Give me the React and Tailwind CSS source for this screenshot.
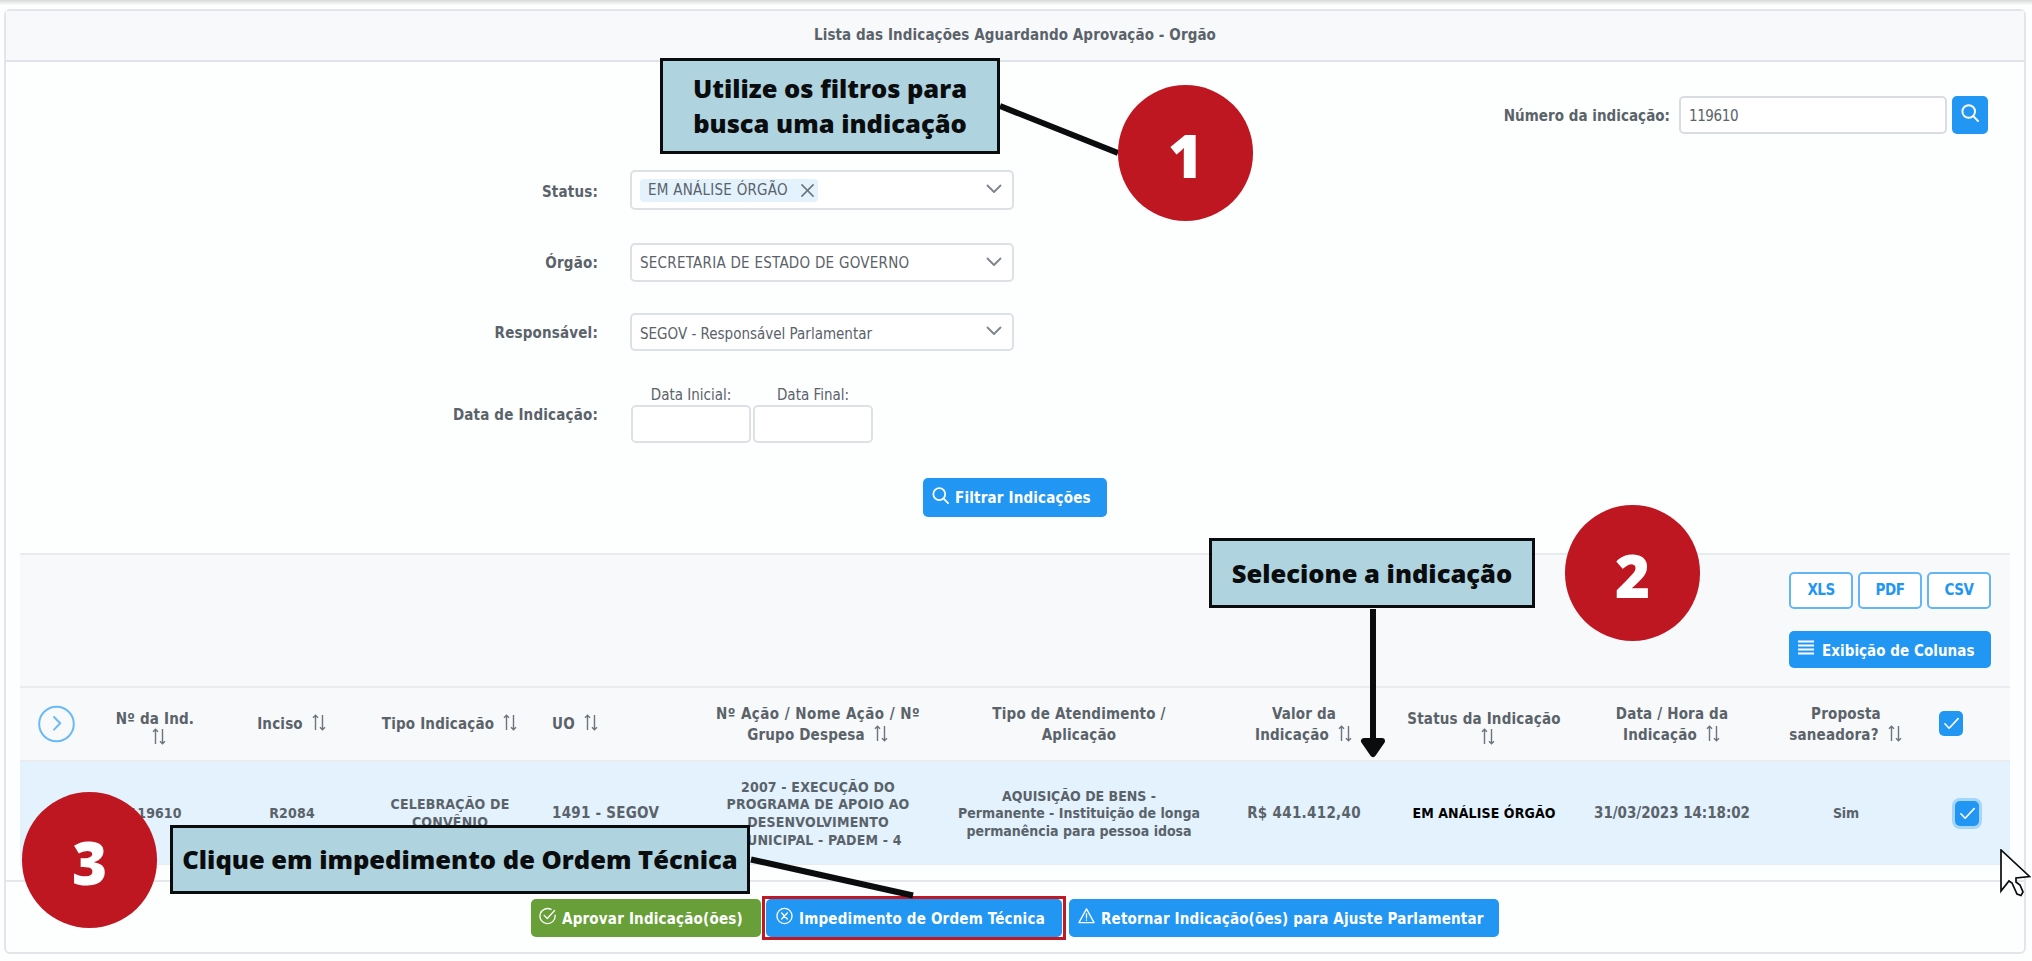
import React from "react";

const SearchIcon = ({ className }) => (
  <svg className={className} viewBox="0 0 18 18" fill="none" stroke="currentColor" strokeWidth="1.9" strokeLinecap="round">
    <circle cx="7.7" cy="7.5" r="6.3" />
    <path d="M12.3 12.2 17 17" />
  </svg>
);

const ChevronDown = () => (
  <svg className="h-[10px] w-[16px] shrink-0 text-[#7d848b]" viewBox="0 0 16 10" fill="none" stroke="currentColor" strokeWidth="1.8" strokeLinecap="round" strokeLinejoin="round">
    <path d="M1.5 1.5 8 8 14.5 1.5" />
  </svg>
);

const SortIcon = ({ className = "" }) => (
  <svg className={"inline-block h-[17px] w-[16px] shrink-0 text-[#6c757d] " + className} viewBox="0 0 16 17" fill="none" stroke="currentColor" strokeWidth="1.4">
    <path d="M4.5 16V1.500M2 3.700 4.500 1.200 7 3.700M11.500 1v14.500M9 13.300l2.500 2.500 2.500-2.500" />
  </svg>
);

const CheckBox = ({ focused }) => (
  <span className={"flex h-[25px] w-[24px] items-center justify-center rounded-[5px] bg-[#2196f3] text-white " + (focused ? "shadow-[0_0_0_3px_#a6d5fa]" : "")}>
    <svg className="h-[13px] w-[15px]" viewBox="0 0 17 13" fill="none" stroke="currentColor" strokeWidth="1.8" strokeLinecap="round" strokeLinejoin="round">
      <path d="M1 6.8 5.8 11.8 16 1" />
    </svg>
  </span>
);

const Select = ({ height, children }) => (
  <div className={"flex w-[384px] items-center justify-between rounded-[5px] border-2 border-[#dde1e6] bg-white pr-[10px] pl-2 text-[15px] font-normal " + height}>
    {children}
    <div className="pb-[2px]">
      <ChevronDown />
    </div>
  </div>
);

const Field = ({ label, labelClass = "", className = "", children }) => (
  <div className={"flex items-center " + className}>
    <div className={"w-[592px] text-right " + labelClass}>{label}</div>
    <div className="ml-8">{children}</div>
  </div>
);

const Lines = ({ items }) =>
  items.map((line, i) => (
    <div key={i} className="whitespace-nowrap">
      {line}
    </div>
  ));

const Sorted = ({ children }) => (
  <span className="inline-flex items-center gap-2">
    {children}
    <SortIcon className="-mt-1" />
  </span>
);

const columns = "grid grid-cols-[74px_122px_152px_164px_168px_236px_286px_164px_196px_180px_168px_80px] items-center text-center";

const Badge = ({ className, children }) => (
  <div className={"absolute flex h-[136px] w-[135px] items-center justify-center rounded-full bg-[#be1722] pt-[3px] font-['Open_Sans',sans-serif] text-[60px] leading-none font-extrabold tracking-normal text-white " + className}>
    {children}
  </div>
);

const Callout = ({ className, children }) => (
  <div className={"absolute flex flex-col items-center justify-center border-[3px] border-[#0a0c0e] bg-[#b0d3e0] font-['Open_Sans',sans-serif] text-[25.5px] leading-[35px] font-extrabold tracking-normal whitespace-nowrap text-[#0a0c0e] " + className}>
    {children}
  </div>
);

const ActionButton = ({ className, icon, children }) => (
  <div className={"flex h-[38px] items-center gap-[6px] rounded-[5px] font-bold whitespace-nowrap text-white " + className}>
    <svg className="-mt-1 h-[18px] w-[17px] shrink-0" viewBox="0 0 18 18" fill="none" stroke="currentColor" strokeWidth="1.4" strokeLinecap="round" strokeLinejoin="round">
      {icon}
    </svg>
    <span className="pt-[3px]">{children}</span>
  </div>
);

export default function App() {
  return (
    <div className="relative h-[961px] w-[2032px] overflow-hidden bg-[#fdfefe] font-['DejaVu_Sans_Condensed','DejaVu_Sans',sans-serif] text-[15px] leading-[21px] font-bold tracking-[0.18px] text-[#5a626a]">
      <div className="h-[9px] bg-linear-to-b from-[#d9d9d9] to-[#fdfefe] to-60%" />

      <div className="ml-[4px] h-[945px] w-[2022px] rounded-[6px] border-2 border-[#e2e5e9]">
        <div className="flex h-[51px] items-center justify-center border-b-2 border-[#e0e3e8] bg-[#f8f9fa] tracking-[0.1px]">
          Lista das Indicações Aguardando Aprovação - Orgão
        </div>

        <div className="mt-[34px] flex h-[38px] items-center justify-end pr-[36px]">
          <span className="pt-[3px] tracking-[0.03px]">Número da indicação:</span>
          <div className="ml-[9px] flex h-[38px] w-[268px] items-center rounded-[5px] border-2 border-[#d9dde2] bg-white pt-[2px] pl-2 font-normal tracking-[-0.4px]">119610</div>
          <div className="ml-[5px] flex h-[38px] w-[36px] items-center justify-center rounded-[5px] bg-[#2196f3] pb-1 text-white">
            <SearchIcon className="size-[18px]" />
          </div>
        </div>

        <Field label="Status:" labelClass="pt-[4px]" className="mt-[36px]">
          <Select height="h-[40px]">
            <div className="flex h-[23px] items-center rounded-[4px] bg-[#e3f2fd] pr-1 pl-2">
              <span className="tracking-[0.25px]">EM ANÁLISE ÓRGÃO</span>
              <svg className="ml-[13px] size-[13px]" viewBox="0 0 14 14" fill="none" stroke="#6c757d" strokeWidth="1.7" strokeLinecap="round">
                <path d="M1 1 13 13M13 1 1 13" />
              </svg>
            </div>
          </Select>
        </Field>
        <Field label="Órgão:" labelClass="pt-[1px]" className="mt-[33px]">
          <Select height="h-[39px]">
            <span className="pt-[2px] tracking-[0.26px]">SECRETARIA DE ESTADO DE GOVERNO</span>
          </Select>
        </Field>
        <Field label="Responsável:" labelClass="pt-[3px]" className="mt-[31px]">
          <Select height="h-[38px]">
            <span className="pt-1 tracking-normal">SEGOV - Responsável Parlamentar</span>
          </Select>
        </Field>
        <Field label="Data de Indicação:" labelClass="pt-[2px]" className="mt-[34px]">
          <div className="flex gap-[2px] pl-[1px] text-center font-normal tracking-normal">
            {["Data Inicial:", "Data Final:"].map((label) => (
              <div key={label}>
                <div className="h-[20px]">{label}</div>
                <div className="h-[38px] w-[120px] rounded-[5px] border-2 border-[#dde1e6] bg-white" />
              </div>
            ))}
          </div>
        </Field>

        <div className="mx-auto mt-[35px] flex h-[39px] w-[184px] items-center gap-[6px] rounded-[5px] bg-[#2196f3] pl-[9px] whitespace-nowrap text-white">
          <SearchIcon className="-mt-1 size-[17px] shrink-0" />
          <span className="pt-[2px]">Filtrar Indicações</span>
        </div>

        <div className="mt-[36px] ml-[14px] w-[1990px]">
          <div className="flex h-[133px] flex-col items-end gap-[22px] border-t-2 border-[#e9ecef] bg-[#f8f9fb] pt-[17px] pr-[19px] text-[#2196f3]">
            <div className="flex gap-[5px]">
              {["XLS", "PDF", "CSV"].map((type) => (
                <div key={type} className="flex h-[37px] w-[64px] items-center justify-center rounded-[5px] border-2 border-[#64b5f7] bg-white tracking-[-0.5px]">
                  {type}
                </div>
              ))}
            </div>
            <div className="flex h-[37px] w-[202px] items-center gap-[8px] rounded-[5px] bg-[#2196f3] pl-[9px] tracking-[0.05px] whitespace-nowrap text-white">
              <svg className="-mt-1 h-[15px] w-[16px] shrink-0" viewBox="0 0 16 15" stroke="currentColor" strokeWidth="2">
                <path d="M0 1.5h16M0 5.5h16M0 9.5h16M0 13.5h16" />
              </svg>
              <span className="pt-[3px]">Exibição de Colunas</span>
            </div>
          </div>

          <div className={columns + " h-[76px] border-y-2 border-[#e9ecef] bg-[#f8f9fa] pt-[1px]"}>
            <div className="-mt-[2px] -ml-[1px] flex justify-center">
              <svg className="h-[38px] w-[37px] text-[#6bb9f8]" viewBox="0 0 37 38" fill="none" stroke="currentColor" strokeWidth="2">
                <circle cx="18.5" cy="19" r="17.3" />
                <path d="M16 12l6.2 6.3-6.2 6.3" strokeLinecap="round" strokeLinejoin="round" />
              </svg>
            </div>
            <div className="flex flex-col items-center pt-1">
              <span>Nº da Ind.</span>
              <SortIcon className="-mt-[2px] ml-2" />
            </div>
            <div><Sorted>Inciso</Sorted></div>
            <div><Sorted>Tipo Indicação</Sorted></div>
            <div className="pl-5 text-left"><Sorted>UO</Sorted></div>
            <div>
              <div className="tracking-[0.45px]">Nº Ação / Nome Ação / Nº</div>
              <Sorted>Grupo Despesa</Sorted>
            </div>
            <div className="tracking-[0.2px]"><Lines items={["Tipo de Atendimento /", "Aplicação"]} /></div>
            <div>
              <div>Valor da</div>
              <Sorted>Indicação</Sorted>
            </div>
            <div className="flex flex-col items-center pt-1">
              <span>Status da Indicação</span>
              <SortIcon className="-mt-[2px] ml-2" />
            </div>
            <div>
              <div>Data / Hora da</div>
              <Sorted>Indicação</Sorted>
            </div>
            <div>
              <div>Proposta</div>
              <Sorted>saneadora?</Sorted>
            </div>
            <div className="-mt-[2px] pl-[9px]"><CheckBox /></div>
          </div>

          <div className={columns + " h-[103px] border-b border-[#e9ecef] bg-[#e3f2fd] pt-[2px] text-[14px] leading-[17.6px]"}>
            <div className="flex justify-center">
              <svg className="h-[10px] w-[16px]" viewBox="0 0 16 10" fill="none" stroke="#6c757d" strokeWidth="1.6">
                <path d="M2 1l6 6 6-6" />
              </svg>
            </div>
            <div className="tracking-[0.1px]">119610</div>
            <div>R2084</div>
            <div><Lines items={["CELEBRAÇÃO DE", "CONVÊNIO"]} /></div>
            <div className="pl-5 text-left text-[15px] tracking-[0.25px]">1491 - SEGOV</div>
            <div>
              <Lines items={["2007 - EXECUÇÃO DO", "PROGRAMA DE APOIO AO", "DESENVOLVIMENTO", "MUNICIPAL - PADEM - 4"]} />
            </div>
            <div className="tracking-normal">
              <Lines items={["AQUISIÇÃO DE BENS -", "Permanente - Instituição de longa", "permanência para pessoa idosa"]} />
            </div>
            <div className="text-[15px] tracking-[0.3px]">R$ 441.412,40</div>
            <div className="tracking-[0.1px] text-black">EM ANÁLISE ÓRGÃO</div>
            <div className="text-[15px] tracking-[-0.05px]">31/03/2023 14:18:02</div>
            <div className="tracking-[-0.1px]">Sim</div>
            <div className="-mt-[2px] pl-[25px]"><CheckBox focused /></div>
          </div>
        </div>

        <div className="mt-[15px] flex h-[70px] items-start justify-center border-t-2 border-[#e4e7ea] pt-[17px]">
          <ActionButton
            className="w-[230px] bg-[#689f38] pl-[8px]"
            icon={<><path d="M17 8.2a8 8 0 1 1-4.2-6.2" /><path d="M5.5 8.3 8.7 11.6 16.5 3.2" /></>}
          >
            <span className="tracking-[0.2px]">Aprovar Indicação(ões)</span>
          </ActionButton>
          <div className="relative mr-[7px] ml-[5px]">
            <ActionButton className="w-[296px] bg-[#2196f3] pl-[10px]" icon={<><circle cx="9" cy="9" r="8" /><path d="M6 5.8l6 6.4M12 5.8l-6 6.4" /></>}>
              <span className="tracking-[0.2px]">Impedimento de Ordem Técnica</span>
            </ActionButton>
            <div className="absolute -inset-x-[4px] -inset-y-[3px] border-[3px] border-[#c01824]" />
          </div>
          <ActionButton className="w-[430px] bg-[#2196f3] pl-[9px]" icon={<><path d="M9 1.5 1 16h16Z" /><path d="M9 6.5v4.5M9 13.2v.3" /></>}>
            <span>Retornar Indicação(ões) para Ajuste Parlamentar</span>
          </ActionButton>
        </div>
      </div>

      <svg className="absolute inset-0 h-[961px] w-[2032px]" viewBox="0 0 2032 961" fill="none" stroke="#0a0c0e" strokeWidth="6">
        <path d="M1000 106 1118 153" />
        <path d="M1373 609V742" />
        <path d="M751 859.5 913 895.5" />
        <path d="M1364 741h18l-9 13Z" fill="#0a0c0e" strokeLinejoin="round" />
      </svg>

      <Callout className="top-[58px] left-[660px] h-[96px] w-[340px]">
        <span>Utilize os filtros para</span>
        <span>busca uma indicação</span>
      </Callout>
      <Callout className="top-[538px] left-[1209px] h-[70px] w-[326px]">Selecione a indicação</Callout>
      <Callout className="top-[825px] left-[170px] h-[69px] w-[580px]">Clique em impedimento de Ordem Técnica</Callout>

      <Badge className="top-[85px] left-[1118px]">1</Badge>
      <Badge className="top-[505px] left-[1565px]">2</Badge>
      <Badge className="top-[792px] left-[22px]">3</Badge>

      <svg className="absolute top-[849px] left-[2000px] h-[48px] w-[31px]" viewBox="0 0 31 48" fill="white" stroke="#0a0c0e" strokeWidth="1.7">
        <path d="M1 1V42L9 32 12 34 17 45 21 46.500 23 43 20 36 16 33V29L29.500 27.500Z" />
      </svg>
    </div>
  );
}
